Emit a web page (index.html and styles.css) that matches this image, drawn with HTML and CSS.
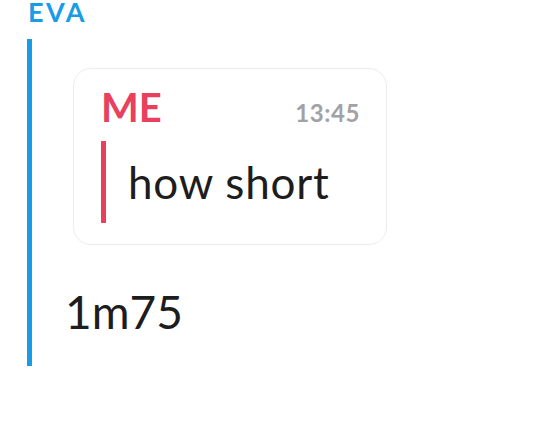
FILE: index.html
```html
<!DOCTYPE html>
<html lang="en">
<head>
    <meta charset="UTF-8">
    <meta name="viewport" content="width=device-width, initial-scale=1.0">
    <title>Chat</title>
    <link rel="stylesheet" href="styles.css">
</head>
<body>
    <section class="message">
        <div class="sender sender-eva">EVA</div>
        <div class="thread">
            <div class="quote-card">
                <div class="quote-head">
                    <span class="sender sender-me">ME</span>
                    <span class="time">13:45</span>
                </div>
                <div class="quote-body">how short</div>
            </div>
            <p class="reply">1m75</p>
        </div>
    </section>
</body>
</html>
```

FILE: styles.css
```css
body {
    margin: 0;
    background: #fff;
    font-family: Lato, "Open Sans", sans-serif;
    color: #1d1d1d;
}
.message {
    padding: 0 0 0 27px;
}
.sender {
    font-weight: 700;
}
.sender-eva {
    color: #1a9be6;
    font-size: 27px;
    line-height: 23px;
    letter-spacing: 2.5px;
    padding-left: 1px;
}
.thread {
    margin-top: 16px;
    border-left: 5px solid #1a9be6;
    padding: 29px 0 29px 0;
    width: 390px;
}
.quote-card {
    margin-left: 41px;
    width: 314px;
    height: 177px;
    box-sizing: border-box;
    border: 1px solid #ececec;
    border-radius: 18px;
    padding: 20px 26px 0 27px;
}
.quote-head {
    display: flex;
    justify-content: space-between;
    align-items: baseline;
}
.sender-me {
    color: #e8405e;
    font-size: 40px;
    line-height: 36px;
}
.time {
    color: #a2a2a6;
    font-weight: 700;
    font-size: 24px;
    letter-spacing: 0.6px;
}
.quote-body {
    margin-top: 14px;
    border-left: 5px solid #e8405e;
    padding-left: 22px;
    font-size: 44px;
    letter-spacing: 0.8px;
    line-height: 82px;
    height: 82px;
}
.reply {
    margin: 42px 0 0 33px;
    font-size: 46px;
    line-height: 50px;
}
```
